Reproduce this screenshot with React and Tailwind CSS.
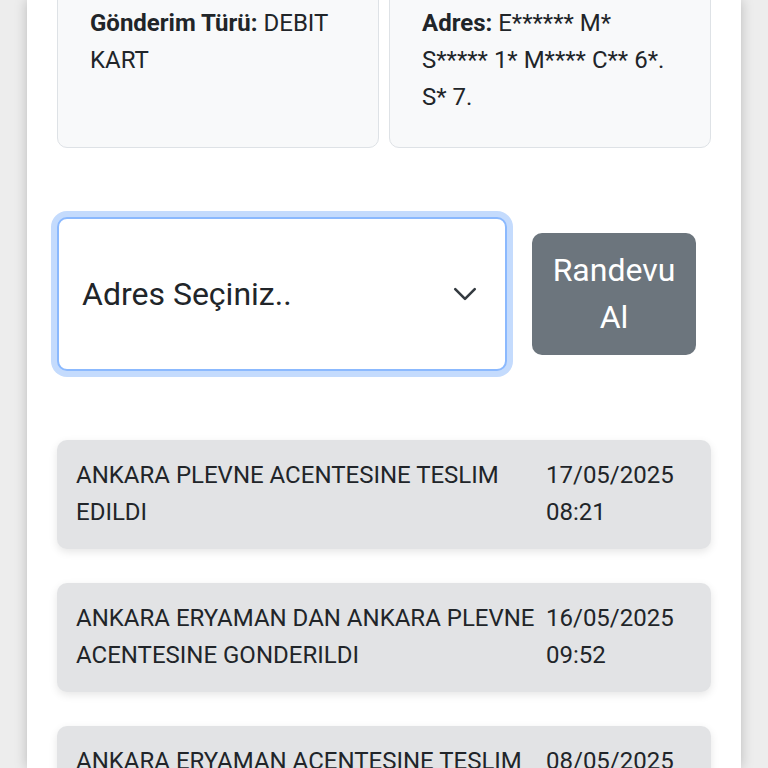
import React from "react";

const items = [
  { text: "ANKARA PLEVNE ACENTESINE TESLIM EDILDI", date: "17/05/2025", time: "08:21" },
  { text: "ANKARA ERYAMAN DAN ANKARA PLEVNE ACENTESINE GONDERILDI", date: "16/05/2025", time: "09:52" },
  { text: "ANKARA ERYAMAN ACENTESINE TESLIM EDILDI", date: "08/05/2025", time: "17:14" },
];

export default function App() {
  return (
    <div
      className="h-[768px] w-[768px] overflow-hidden bg-[#ededed]"
      style={{ fontFamily: "Roboto, 'Noto Sans', sans-serif" }}
    >
      <div className="mx-auto flow-root h-full w-[714px] bg-white px-[30px] text-[#212529] shadow-[0_0_12px_rgba(0,0,0,0.22)]">
        <div className="-mt-[29px] grid grid-cols-2 gap-[10px] text-[24px] leading-[37px]">
          <div className="rounded-[10px] border-[1.5px] border-[#dee2e6] bg-[#f8f9fa] px-[32px] pt-[33px] pb-[31px]">
            <div className="whitespace-nowrap">
              <span className="font-bold">Gönderim Türü:</span> DEBIT
            </div>
            <div>KART</div>
          </div>
          <div className="rounded-[10px] border-[1.5px] border-[#dee2e6] bg-[#f8f9fa] px-[32px] pt-[33px] pb-[31px]">
            <div className="whitespace-nowrap">
              <span className="font-bold">Adres:</span> E****** M*
            </div>
            <div className="whitespace-nowrap">S***** 1* M**** C** 6*.</div>
            <div>S* 7.</div>
          </div>
        </div>

        <div className="mt-[69px] flex items-center">
          <div className="flex h-[154px] w-[450px] items-center justify-between rounded-[10px] border-2 border-[#8bb9fe] bg-white pl-[23px] pr-[27px] shadow-[0_0_0_6px_#c4dbfd]">
            <span className="text-[32px] leading-[47px]">Adres Seçiniz..</span>
            <svg width="26" height="26" viewBox="0 0 16 16" fill="none">
              <path d="M2 5l6 6 6-6" stroke="#343a40" strokeWidth="1.6" strokeLinecap="round" strokeLinejoin="round" />
            </svg>
          </div>
          <button className="ml-[25px] flex h-[122px] w-[164px] flex-col items-center justify-center rounded-[10px] bg-[#6c757d] text-[32px] leading-[47px] text-white">
            <span>Randevu</span>
            <span>Al</span>
          </button>
        </div>

        <div className="mt-[69px] flex flex-col gap-[34px]">
          {items.map((it, i) => (
            <div
              key={i}
              className="grid grid-cols-[1fr_146px] rounded-[10px] bg-[#e2e3e5] pl-[19px] pr-[19px] pt-[17px] pb-[18px] text-[24px] leading-[37px] shadow-[0_3px_8px_rgba(0,0,0,0.1)]"
            >
              <div>{it.text}</div>
              <div>
                <div>{it.date}</div>
                <div>{it.time}</div>
              </div>
            </div>
          ))}
        </div>
      </div>
    </div>
  );
}
